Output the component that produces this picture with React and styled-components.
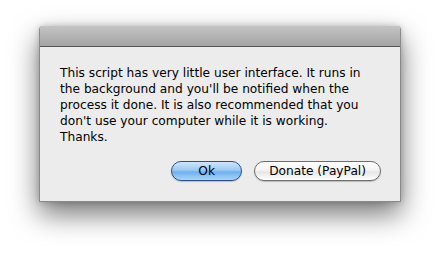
import React from 'react';
import styled, { createGlobalStyle } from 'styled-components';

const Global = createGlobalStyle`
  html, body {
    margin: 0;
    background: #ffffff;
  }
`;

const Page = styled.div`
  width: 440px;
  height: 257px;
  padding: 26px 0 0 39px;
  box-sizing: border-box;
`;

const Sheet = styled.div`
  width: 362px;
  height: 176px;
  display: flex;
  flex-direction: column;
  background: #ececec;
  border: 1px solid #8a8a8a;
  border-top: none;
  border-radius: 4px 4px 0 0;
  box-sizing: border-box;
  box-shadow: 0 12px 28px rgba(0, 0, 0, 0.55), 0 0 6px rgba(0, 0, 0, 0.2);
  overflow: hidden;
`;

const TitleBar = styled.div`
  height: 20px;
  flex-shrink: 0;
  background: linear-gradient(#c4c4c4, #a4a4a4);
  border-bottom: 1px solid #555555;
`;

const Body = styled.div`
  flex: 1;
  display: flex;
  flex-direction: column;
  padding: 18px 19px 0 20px;
`;

const Message = styled.p`
  margin: 0;
  white-space: nowrap;
  font-family: 'DejaVu Sans', 'Lucida Grande', sans-serif;
  font-size: 12.2px;
  line-height: 16px;
  color: #000;
`;

const Buttons = styled.div`
  display: flex;
  justify-content: flex-end;
  gap: 12px;
  margin-top: 16px;
`;

const Button = styled.button`
  height: 20px;
  min-width: ${p => (p.$primary ? '71px' : 'auto')};
  padding: 0 14px;
  border-radius: 10px;
  font-family: 'DejaVu Sans', 'Lucida Grande', sans-serif;
  font-size: 12.2px;
  color: #000;
  border: 1px solid ${p => (p.$primary ? '#2e4f86' : '#6d6d6d')};
  background: ${p =>
    p.$primary
      ? 'linear-gradient(#cfe6fb 0%, #9ccaf4 45%, #6fb0ee 55%, #a6d6fb 100%)'
      : 'linear-gradient(#ffffff 0%, #f4f4f4 45%, #e6e6e6 55%, #ffffff 100%)'};
  box-shadow: 0 1px 1px rgba(0, 0, 0, 0.2);
`;

export default function App() {
  return (
    <Page>
      <Global />
      <Sheet>
        <TitleBar />
        <Body>
          <Message>
            This script has very little user interface. It runs in
            <br />
            the background and you'll be notified when the
            <br />
            process it done. It is also recommended that you
            <br />
            don't use your computer while it is working.
            <br />
            Thanks.
          </Message>
          <Buttons>
            <Button $primary>Ok</Button>
            <Button>Donate (PayPal)</Button>
          </Buttons>
        </Body>
      </Sheet>
    </Page>
  );
}
